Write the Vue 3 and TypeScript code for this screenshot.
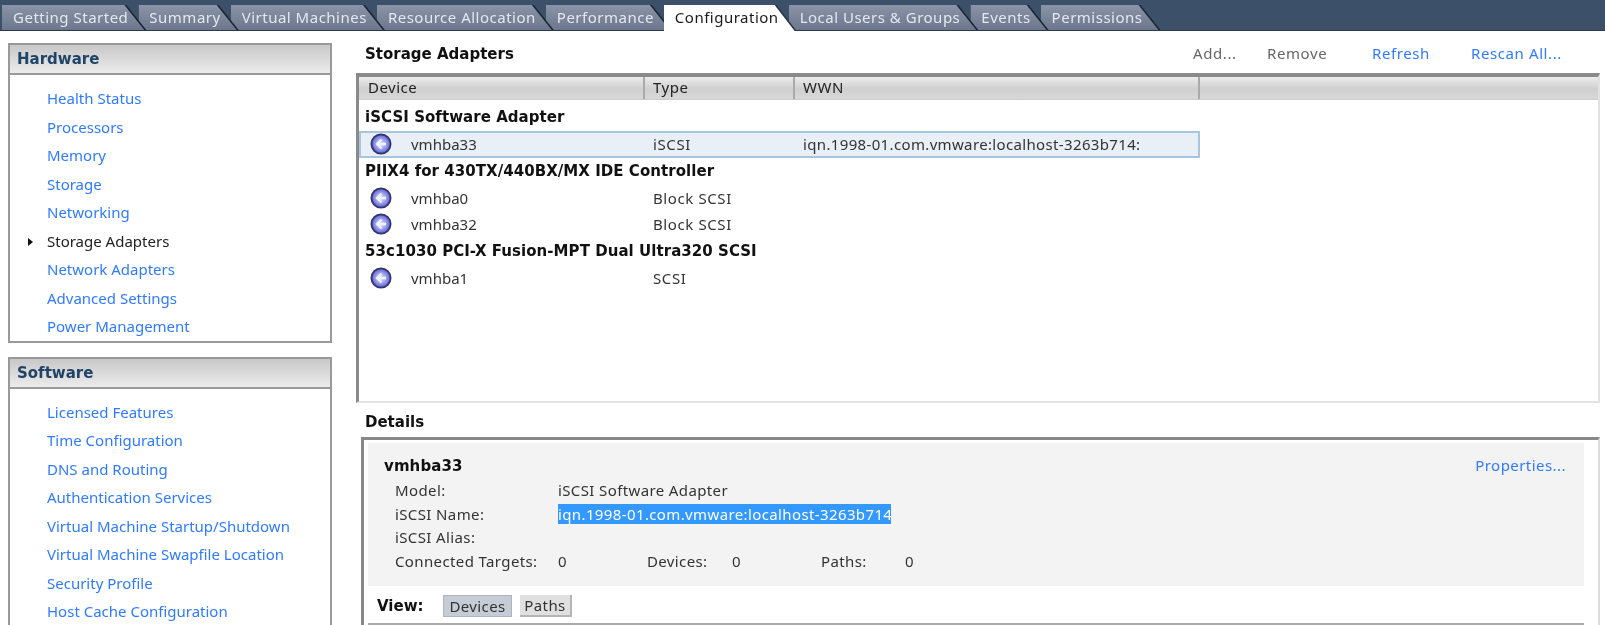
<script setup lang="ts">
const tabs = ['Getting Started', 'Summary', 'Virtual Machines', 'Resource Allocation', 'Performance', 'Configuration', 'Local Users & Groups', 'Events', 'Permissions']
const hardware = ['Health Status', 'Processors', 'Memory', 'Storage', 'Networking', 'Storage Adapters', 'Network Adapters', 'Advanced Settings', 'Power Management']
const software = ['Licensed Features', 'Time Configuration', 'DNS and Routing', 'Authentication Services', 'Virtual Machine Startup/Shutdown', 'Virtual Machine Swapfile Location', 'Security Profile', 'Host Cache Configuration']
const groups = [
  { name: 'iSCSI Software Adapter', rows: [{ device: 'vmhba33', type: 'iSCSI', wwn: 'iqn.1998-01.com.vmware:localhost-3263b714:', selected: true }] },
  { name: 'PIIX4 for 430TX/440BX/MX IDE Controller', rows: [{ device: 'vmhba0', type: 'Block SCSI', wwn: '', selected: false }, { device: 'vmhba32', type: 'Block SCSI', wwn: '', selected: false }] },
  { name: '53c1030 PCI-X Fusion-MPT Dual Ultra320 SCSI', rows: [{ device: 'vmhba1', type: 'SCSI', wwn: '', selected: false }] },
]
</script>

<template>
  <div class="page">
    <nav class="tabbar">
      <div
        v-for="(t, i) in tabs"
        :key="t"
        class="tab"
        :class="{ active: t === 'Configuration' }"
        :style="{ zIndex: t === 'Configuration' ? 50 : 20 - i }"
      ><span>{{ t }}</span></div>
    </nav>

    <div class="main">
      <aside class="side">
        <section class="box">
          <h3>Hardware</h3>
          <ul>
            <li v-for="h in hardware" :key="h" :class="{ cur: h === 'Storage Adapters' }">{{ h }}</li>
          </ul>
        </section>
        <section class="box second">
          <h3>Software</h3>
          <ul>
            <li v-for="s in software" :key="s">{{ s }}</li>
          </ul>
        </section>
      </aside>

      <main class="content">
        <div class="titlebar">
          <h2>Storage Adapters</h2>
          <div class="actions">
            <span class="off w1">Add...</span>
            <span class="off w2">Remove</span>
            <span class="link w3">Refresh</span>
            <span class="link w4">Rescan All...</span>
          </div>
        </div>

        <div class="table">
          <div class="thead">
            <div class="th">Device</div>
            <div class="th">Type</div>
            <div class="th">WWN</div>
            <div class="th last"></div>
          </div>
          <div class="tbody">
            <template v-for="g in groups" :key="g.name">
              <div class="group">{{ g.name }}</div>
              <div v-for="r in g.rows" :key="r.device" class="row" :class="{ sel: r.selected }">
                <div class="devcell">
                  <svg class="ico" width="22" height="22" viewBox="0 0 22 22">
                    <defs>
                      <radialGradient :id="'g' + r.device" cx="50%" cy="50%" r="55%">
                        <stop offset="0" stop-color="#e6e9ff" />
                        <stop offset="0.55" stop-color="#9298ee" />
                        <stop offset="1" stop-color="#4d50b8" />
                      </radialGradient>
                    </defs>
                    <circle cx="11" cy="11" r="9.6" :fill="'url(#g' + r.device + ')'" stroke="#33346e" stroke-width="1.8" />
                    <path d="M11.5 6.5 L7 11 L11.5 15.5 M7.5 11 H16" fill="none" stroke="#f2f3ff" stroke-width="2.4" />
                  </svg>
                  <span>{{ r.device }}</span>
                </div>
                <div class="typecell">{{ r.type }}</div>
                <div class="wwncell">{{ r.wwn }}</div>
              </div>
            </template>
          </div>
        </div>

        <h2 class="dtitle">Details</h2>
        <div class="details">
          <div class="panel">
            <div class="nameline">
              <strong>vmhba33</strong>
              <span class="link props">Properties...</span>
            </div>
            <div class="kv"><span class="k">Model:</span><span>iSCSI Software Adapter</span></div>
            <div class="kv"><span class="k">iSCSI Name:</span><span class="hl">iqn.1998-01.com.vmware:localhost-3263b714</span></div>
            <div class="kv"><span class="k">iSCSI Alias:</span></div>
            <div class="kv">
              <span class="k">Connected Targets:</span>
              <span class="c1">0</span>
              <span class="c2">Devices:</span>
              <span class="c1">0</span>
              <span class="c3">Paths:</span>
              <span>0</span>
            </div>
          </div>
          <div class="viewbar">
            <strong>View:</strong>
            <button class="btn on" type="button">Devices</button>
            <button class="btn" type="button">Paths</button>
          </div>
          <div class="rule"></div>
        </div>
      </main>
    </div>
  </div>
</template>

<style>
html, body { margin: 0; overflow: hidden; background: #fff; }
</style>

<style scoped>
.page {
  width: 1605px;
  height: 625px;
  overflow: hidden;
  font-family: "Noto Sans", "DejaVu Sans", sans-serif;
  font-size: 15px;
  color: #222;
  background: #fff;
  filter: blur(0.35px);
}
.tabbar {
  display: flex;
  height: 31px;
  padding: 5px 0 0 2px;
  box-sizing: border-box;
  background: #3c5069;
  border-bottom: 1px solid #2a3a4c;
}
.tab {
  position: relative;
  height: 25px;
  margin-right: -8px;
  padding: 0 18px 0 11px;
  line-height: 24px;
  letter-spacing: 0.5px;
  color: #e4e8ee;
  background: #1c2530;
  clip-path: polygon(0 0, calc(100% - 20px) 0, 100% 100%, 0 100%);
  white-space: nowrap;
}
.tab::before {
  content: "";
  position: absolute;
  inset: 0;
  background: linear-gradient(#8a93a8, #6c778d);
  clip-path: polygon(0 0, calc(100% - 22px) 0, calc(100% - 2px) 100%, 0 100%);
}
.tab span { position: relative; }
.tab.active { color: #1a1a1a; background: #2a3442; height: 26px; }
.tab.active::before { background: #fff; }
.main {
  display: grid;
  grid-template-columns: 356px 1fr;
  margin-top: -1px;
}
.side { padding: 13px 0 0 8px; width: 324px; }
.box { border: 2px solid #999; box-sizing: border-box; }
.box.second { margin-top: 14px; }
.box h3 {
  margin: 0;
  height: 28px;
  padding-left: 7px;
  line-height: 29px;
  font-family: "DejaVu Sans", sans-serif;
  font-size: 15px;
  font-weight: 700;
  color: #1f4468;
  background: linear-gradient(#c8c8c8, #ececec);
  border-bottom: 2px solid #999;
  box-sizing: content-box;
}
.box ul { list-style: none; margin: 0; padding: 9px 0 0 37px; }
.box li {
  position: relative;
  height: 28.5px;
  line-height: 28px;
  color: #2f7bff;
  white-space: nowrap;
}
.box li.cur { color: #222; }
.box li.cur::before {
  content: "";
  position: absolute;
  left: -19px;
  top: 11px;
  border-left: 5px solid #111;
  border-top: 4px solid transparent;
  border-bottom: 4px solid transparent;
}
.content { width: 1244px; }
h2 { margin: 0; font-family: "DejaVu Sans", sans-serif; font-size: 15px; font-weight: 700; color: #111; }
strong { font-family: "DejaVu Sans", sans-serif; font-size: 15px; font-weight: 700; }
.titlebar {
  display: flex;
  height: 43px;
  align-items: center;
  padding: 4px 0 0 9px;
  box-sizing: border-box;
}
.actions { display: flex; margin-left: auto; letter-spacing: 0.6px; margin-top: -2px; }
.off { color: #666; }
.link { color: #2f7bff; }
.props { letter-spacing: 0.45px; margin-top: -1px; }
.w1 { width: 74px; }
.w2 { width: 105px; }
.w3 { width: 99px; }
.w4 { width: 129px; }
.table {
  height: 330px;
  box-sizing: border-box;
  border-top: 4px solid #8a8a8a;
  border-left: 3px solid #8a8a8a;
  border-right: 2px solid #e2e2e2;
  border-bottom: 2px solid #e2e2e2;
}
.thead {
  display: grid;
  grid-template-columns: 286px 150px 405px 1fr;
  height: 23px;
  background: linear-gradient(#ececec, #cfcfcf 55%, #d8d8d8);
  border-bottom: 1px solid #ccc;
  box-sizing: border-box;
  letter-spacing: 0.5px;
}
.th {
  padding-left: 8px;
  line-height: 20px;
  border-right: 2px solid #aaa;
  box-sizing: border-box;
}
.th:first-child { padding-left: 9px; }
.th.last { border-right: 0; }
.tbody { padding-top: 4px; }
.group {
  height: 27px;
  line-height: 27px;
  padding-left: 6px;
  font-family: "DejaVu Sans", sans-serif;
  font-size: 15px;
  font-weight: 700;
  letter-spacing: 0.05px;
  color: #111;
  white-space: nowrap;
}
.row {
  display: grid;
  grid-template-columns: 286px 150px 405px;
  width: 841px;
  height: 26.5px;
  align-items: center;
  box-sizing: border-box;
  color: #333;
  border: 2px solid transparent;
  border-left: 0;
}
.row.sel { background: #e9eff6; border-color: #a9c4dd; border-left: 2px solid #a9c4dd; grid-template-columns: 284px 150px 405px; }
.devcell { display: flex; align-items: center; padding-left: 11px; }
.row.sel .devcell { padding-left: 9px; }
.ico { flex: none; margin-right: 19px; }
.typecell { padding-left: 8px; letter-spacing: 0.6px; }
.wwncell { padding-left: 8px; overflow: hidden; white-space: nowrap; letter-spacing: 0.35px; }
.dtitle { height: 34px; padding: 8px 0 0 9px; box-sizing: border-box; line-height: 22px; }
.details {
  margin-left: 5px;
  height: 188px;
  box-sizing: border-box;
  border-top: 3px solid #888;
  border-left: 3px solid #888;
  border-right: 2px solid #ddd;
}
.panel {
  margin: 3px 14px 0 4px;
  height: 143px;
  padding: 11px 18px 0 16px;
  box-sizing: border-box;
  background: #f3f3f3;
}
.nameline { display: flex; justify-content: space-between; height: 24px; line-height: 24px; letter-spacing: 0.1px; }
.nameline strong { color: #111; }
.kv { display: flex; height: 23.7px; line-height: 24px; padding-left: 11px; color: #333; align-items: center; white-space: nowrap; letter-spacing: 0.38px; }
.k { width: 163px; flex: none; }
.c1 { width: 89px; }
.c2 { width: 85px; }
.c3 { width: 84px; }
.hl { width: 333px; height: 20px; line-height: 20px; background: #3399ff; color: #fff; }
.viewbar { display: flex; align-items: center; height: 37px; padding: 3px 0 0 13px; box-sizing: border-box; }
.viewbar strong { width: 66px; color: #111; }
.btn {
  height: 22px;
  padding: 0;
  margin-right: 8px;
  font: inherit;
  line-height: 18px;
  letter-spacing: 0.4px;
  color: #333;
  background: #e0e0e0;
  border: 0;
  border-right: 2px solid #b5b5b5;
  border-bottom: 2px solid #b5b5b5;
  width: 52px;
}
.btn.on { width: 69px; background: #c5ccd5; border: 1px solid #b0b5bb; }
.rule { height: 2px; margin: 0 14px 0 4px; background: #aaa; }
</style>
